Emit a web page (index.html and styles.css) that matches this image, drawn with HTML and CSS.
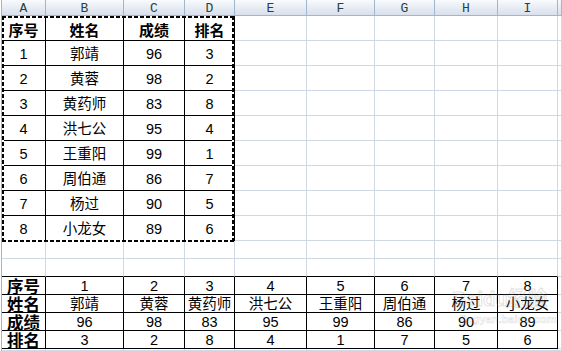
FILE: index.html
```html
<!DOCTYPE html>
<html lang="zh">
<head>
<meta charset="utf-8">
<title>Sheet</title>
<link rel="stylesheet" href="styles.css">
</head>
<body>
<div class="sheet">
  <div class="c h">A</div><div class="c h">B</div><div class="c h">C</div><div class="c h">D</div><div class="c h">E</div><div class="c h">F</div><div class="c h">G</div><div class="c h">H</div><div class="c h">I</div><div class="c h"></div>

  <div class="c t th">序号</div><div class="c t th">姓名</div><div class="c t th">成绩</div><div class="c t th">排名</div><div class="c"></div><div class="c"></div><div class="c"></div><div class="c"></div><div class="c"></div><div class="c"></div>
  <div class="c t">1</div><div class="c t">郭靖</div><div class="c t">96</div><div class="c t">3</div><div class="c"></div><div class="c"></div><div class="c"></div><div class="c"></div><div class="c"></div><div class="c"></div>
  <div class="c t">2</div><div class="c t">黄蓉</div><div class="c t">98</div><div class="c t">2</div><div class="c"></div><div class="c"></div><div class="c"></div><div class="c"></div><div class="c"></div><div class="c"></div>
  <div class="c t">3</div><div class="c t">黄药师</div><div class="c t">83</div><div class="c t">8</div><div class="c"></div><div class="c"></div><div class="c"></div><div class="c"></div><div class="c"></div><div class="c"></div>
  <div class="c t">4</div><div class="c t">洪七公</div><div class="c t">95</div><div class="c t">4</div><div class="c"></div><div class="c"></div><div class="c"></div><div class="c"></div><div class="c"></div><div class="c"></div>
  <div class="c t">5</div><div class="c t">王重阳</div><div class="c t">99</div><div class="c t">1</div><div class="c"></div><div class="c"></div><div class="c"></div><div class="c"></div><div class="c"></div><div class="c"></div>
  <div class="c t">6</div><div class="c t">周伯通</div><div class="c t">86</div><div class="c t">7</div><div class="c"></div><div class="c"></div><div class="c"></div><div class="c"></div><div class="c"></div><div class="c"></div>
  <div class="c t">7</div><div class="c t">杨过</div><div class="c t">90</div><div class="c t">5</div><div class="c"></div><div class="c"></div><div class="c"></div><div class="c"></div><div class="c"></div><div class="c"></div>
  <div class="c t">8</div><div class="c t">小龙女</div><div class="c t">89</div><div class="c t">6</div><div class="c"></div><div class="c"></div><div class="c"></div><div class="c"></div><div class="c"></div><div class="c"></div>

  <div class="c"></div><div class="c"></div><div class="c"></div><div class="c"></div><div class="c"></div><div class="c"></div><div class="c"></div><div class="c"></div><div class="c"></div><div class="c"></div>
  <div class="c bt"></div><div class="c bt"></div><div class="c bt"></div><div class="c bt"></div><div class="c bt"></div><div class="c bt"></div><div class="c bt"></div><div class="c bt"></div><div class="c bt"></div><div class="c"></div>

  <div class="c b bl">序号</div><div class="c b">1</div><div class="c b">2</div><div class="c b">3</div><div class="c b">4</div><div class="c b">5</div><div class="c b">6</div><div class="c b">7</div><div class="c b">8</div><div class="c"></div>
  <div class="c b bl">姓名</div><div class="c b">郭靖</div><div class="c b">黄蓉</div><div class="c b">黄药师</div><div class="c b">洪七公</div><div class="c b">王重阳</div><div class="c b">周伯通</div><div class="c b">杨过</div><div class="c b">小龙女</div><div class="c"></div>
  <div class="c b bl">成绩</div><div class="c b">96</div><div class="c b">98</div><div class="c b">83</div><div class="c b">95</div><div class="c b">99</div><div class="c b">86</div><div class="c b">90</div><div class="c b">89</div><div class="c"></div>
  <div class="c b bl">排名</div><div class="c b">3</div><div class="c b">2</div><div class="c b">8</div><div class="c b">4</div><div class="c b">1</div><div class="c b">7</div><div class="c b">5</div><div class="c b">6</div><div class="c"></div>

  <div class="c"></div><div class="c"></div><div class="c"></div><div class="c"></div><div class="c"></div><div class="c"></div><div class="c"></div><div class="c"></div><div class="c"></div><div class="c"></div>

  <div class="marquee"></div>
  <div class="watermark"><span class="wm-big">Baidu经验</span><span class="wm-small">jingyan.baidu.com</span></div>
</div>
</body>
</html>
```

FILE: styles.css
```css
html, body {
  margin: 0;
  padding: 0;
  background: #fff;
  overflow: hidden;
}

.sheet {
  position: relative;
  margin-left: 1px;
  width: 561px;
  height: 351px;
  border-left: 1px solid #9eb6ce;
  box-sizing: border-box;
  display: grid;
  grid-template-columns: 44px 78px 61px 50px 72px 68px 60px 63px 60px 1fr;
  grid-template-rows: 16px repeat(9, 25px) repeat(6, 18px) 1fr;
  font-family: "Liberation Sans", "Noto Sans CJK SC", sans-serif;
  font-size: 14.5px;
  color: #000;
}

.c {
  box-sizing: border-box;
  border-right: 1px solid #d0d7e5;
  border-bottom: 1px solid #d0d7e5;
  display: flex;
  align-items: center;
  justify-content: center;
  white-space: nowrap;
  line-height: 1;
  min-width: 0;
}

.h {
  background: linear-gradient(#f8fafd, #e4eaf3 60%, #d9e1ec);
  border-right-color: #9eb6ce;
  border-bottom-color: #9eb6ce;
  font-family: "Liberation Mono", "DejaVu Sans Mono", monospace;
  font-size: 13px;
  color: #27413e;
  padding-top: 1px;
}

.t {
  border-right-color: #000;
  border-bottom-color: #000;
  padding-top: 2px;
}

.th {
  font-weight: bold;
  font-family: "Noto Sans CJK SC", sans-serif;
  font-size: 15px;
}

.bt {
  border-bottom-color: #000;
}

.b {
  border-right-color: #000;
  border-bottom-color: #000;
  padding-top: 2px;
}

.bl {
  font-family: "Noto Sans CJK SC", sans-serif;
  font-weight: bold;
  font-size: 16.5px;
  overflow: visible;
}

.marquee {
  position: absolute;
  left: 0;
  top: 16px;
  width: 232px;
  height: 226px;
  pointer-events: none;
  background:
    repeating-linear-gradient(90deg, #000 0 4px, #fff 4px 6px) left top / 100% 2px no-repeat,
    repeating-linear-gradient(90deg, #000 0 4px, #fff 4px 6px) left bottom / 100% 2px no-repeat,
    repeating-linear-gradient(180deg, #000 0 4px, #fff 4px 6px) left top / 2px 100% no-repeat,
    repeating-linear-gradient(180deg, #000 0 4px, #fff 4px 6px) right top / 2px 100% no-repeat;
}

.watermark {
  position: absolute;
  left: 450px;
  top: 286px;
  width: 108px;
  display: flex;
  flex-direction: column;
  align-items: flex-start;
  pointer-events: none;
  color: transparent;
  font-family: "Liberation Sans", "Noto Sans CJK SC", sans-serif;
}

.wm-big {
  font-size: 20px;
  font-weight: bold;
  line-height: 26px;
  -webkit-text-stroke: 1px rgba(150, 150, 150, 0.3);
}

.wm-small {
  font-size: 11px;
  font-weight: bold;
  line-height: 14px;
  margin-left: 8px;
  -webkit-text-stroke: 0.6px rgba(150, 150, 150, 0.3);
}
```
